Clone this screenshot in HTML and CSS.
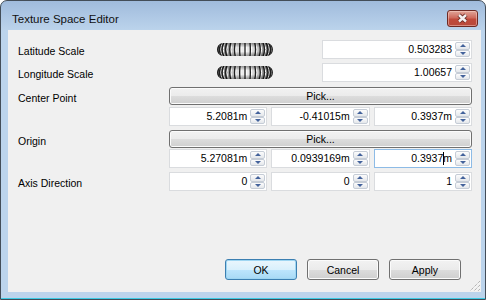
FILE: index.html
```html
<!DOCTYPE html>
<html>
<head>
    <meta charset="utf-8" />
    <title>Texture Space Editor</title>
    <link rel="stylesheet" href="styles.css">
</head>
<body>
    <div class="window">
        <div class="titlebar">
            <span class="title">Texture Space Editor</span>
            <button class="close">
                <svg width="29" height="15" viewBox="0 0 29 15">
                    <path d="M11 4 L18 10.5 M18 4 L11 10.5" stroke="#6a2c26" stroke-width="4.4" fill="none" />
                    <path d="M11 4 L18 10.5 M18 4 L11 10.5" stroke="#f4f0f0" stroke-width="2.4" fill="none" />
                </svg>
            </button>
        </div>

        <div class="client">
            <div class="form">
                <div class="row">
                    <label class="caption">Latitude Scale</label>
                    <div class="controls">
                        <svg class="wheel" width="56" height="13" viewBox="0 0 56 13">
                            <defs>
                                <linearGradient id="wheel-h" x1="0" x2="1" y1="0" y2="0">
                                    <stop offset="0" stop-color="#2c2c2c" />
                                    <stop offset="0.12" stop-color="#7a7a7a" />
                                    <stop offset="0.3" stop-color="#cfcfcf" />
                                    <stop offset="0.5" stop-color="#f4f4f4" />
                                    <stop offset="0.7" stop-color="#cfcfcf" />
                                    <stop offset="0.88" stop-color="#7a7a7a" />
                                    <stop offset="1" stop-color="#2c2c2c" />
                                </linearGradient>
                                <linearGradient id="wheel-v" x1="0" x2="0" y1="0" y2="1">
                                    <stop offset="0" stop-color="#000" stop-opacity="0.4" />
                                    <stop offset="0.35" stop-color="#000" stop-opacity="0" />
                                    <stop offset="0.65" stop-color="#000" stop-opacity="0" />
                                    <stop offset="1" stop-color="#000" stop-opacity="0.4" />
                                </linearGradient>
                                <clipPath id="wheel-clip">
                                    <rect width="56" height="13" rx="6.5" />
                                </clipPath>
                                <g id="wheel-stripes" fill="none">
                                    <path d="M2.7 0 Q-1.2 6.5 2.7 13" />
                                    <path d="M4.2 0 Q0.6 6.5 4.2 13" />
                                    <path d="M6.7 0 Q3.4 6.5 6.7 13" />
                                    <path d="M9.9 0 Q7.1 6.5 9.9 13" />
                                    <path d="M13.8 0 Q11.6 6.5 13.8 13" />
                                    <path d="M18.2 0 Q16.7 6.5 18.2 13" />
                                    <path d="M23 0 Q22.3 6.5 23 13" />
                                    <path d="M28 0 V13" />
                                    <path d="M33 0 Q33.7 6.5 33 13" />
                                    <path d="M37.8 0 Q39.3 6.5 37.8 13" />
                                    <path d="M42.2 0 Q44.4 6.5 42.2 13" />
                                    <path d="M46.1 0 Q48.9 6.5 46.1 13" />
                                    <path d="M49.3 0 Q52.6 6.5 49.3 13" />
                                    <path d="M51.8 0 Q55.4 6.5 51.8 13" />
                                    <path d="M53.3 0 Q57.2 6.5 53.3 13" />
                                </g>
                                <g id="wheel-body">
                                    <rect width="56" height="13" rx="6.5" fill="url(#wheel-h)" />
                                    <g clip-path="url(#wheel-clip)">
                                        <use href="#wheel-stripes" stroke="#ffffff" stroke-width="1" transform="translate(1.3 0)" />
                                        <use href="#wheel-stripes" stroke="#1e1e1e" stroke-width="1.3" />
                                    </g>
                                    <rect width="56" height="13" rx="6.5" fill="url(#wheel-v)" />
                                </g>
                            </defs>
                            <use href="#wheel-body" />
                        </svg>
                        <div class="spinbox wide">
                            <span class="val">0.503283</span>
                            <span class="spin"><i class="spin-btn up"></i><i class="spin-btn down"></i></span>
                        </div>
                    </div>
                </div>

                <div class="row gap-4">
                    <label class="caption">Longitude Scale</label>
                    <div class="controls">
                        <svg class="wheel" width="56" height="13" viewBox="0 0 56 13">
                            <use href="#wheel-body" />
                        </svg>
                        <div class="spinbox wide">
                            <span class="val">1.00657</span>
                            <span class="spin"><i class="spin-btn up"></i><i class="spin-btn down"></i></span>
                        </div>
                    </div>
                </div>

                <div class="row gap-5">
                    <label class="caption">Center Point</label>
                    <div class="controls stack">
                        <button class="pick">Pick...</button>
                        <div class="triple gap-2">
                            <div class="spinbox">
                                <span class="val">5.2081m</span>
                                <span class="spin"><i class="spin-btn up"></i><i class="spin-btn down"></i></span>
                            </div>
                            <div class="spinbox">
                                <span class="val">-0.41015m</span>
                                <span class="spin"><i class="spin-btn up"></i><i class="spin-btn down"></i></span>
                            </div>
                            <div class="spinbox">
                                <span class="val">0.3937m</span>
                                <span class="spin"><i class="spin-btn up"></i><i class="spin-btn down"></i></span>
                            </div>
                        </div>
                    </div>
                </div>

                <div class="row gap-4">
                    <label class="caption">Origin</label>
                    <div class="controls stack">
                        <button class="pick">Pick...</button>
                        <div class="triple gap-1">
                            <div class="spinbox">
                                <span class="val">5.27081m</span>
                                <span class="spin"><i class="spin-btn up"></i><i class="spin-btn down"></i></span>
                            </div>
                            <div class="spinbox">
                                <span class="val">0.0939169m</span>
                                <span class="spin"><i class="spin-btn up"></i><i class="spin-btn down"></i></span>
                            </div>
                            <div class="spinbox focus">
                                <span class="val">0.3937<span class="caret"></span>m</span>
                                <span class="spin"><i class="spin-btn up"></i><i class="spin-btn down"></i></span>
                            </div>
                        </div>
                    </div>
                </div>

                <div class="row gap-4">
                    <label class="caption">Axis Direction</label>
                    <div class="controls">
                        <div class="triple">
                            <div class="spinbox">
                                <span class="val">0</span>
                                <span class="spin"><i class="spin-btn up"></i><i class="spin-btn down"></i></span>
                            </div>
                            <div class="spinbox">
                                <span class="val">0</span>
                                <span class="spin"><i class="spin-btn up"></i><i class="spin-btn down"></i></span>
                            </div>
                            <div class="spinbox">
                                <span class="val">1</span>
                                <span class="spin"><i class="spin-btn up"></i><i class="spin-btn down"></i></span>
                            </div>
                        </div>
                    </div>
                </div>
            </div>

            <div class="footer">
                <button class="btn default">OK</button>
                <button class="btn">Cancel</button>
                <button class="btn">Apply</button>
            </div>

            <svg class="grip" width="11" height="11" viewBox="0 0 11 11">
                <path d="M11 1 L1 11 M11 5 L5 11 M11 9 L9 11" stroke="#ffffff" stroke-width="1" stroke-dasharray="1 1" transform="translate(0.7 0.7)" />
                <path d="M11 1 L1 11 M11 5 L5 11 M11 9 L9 11" stroke="#9a9a9a" stroke-width="1" stroke-dasharray="1 1" />
            </svg>
        </div>
    </div>
</body>
</html>
```

FILE: styles.css
```css
body {
    margin: 0;
    background: #ffffff;
    font-family: "Liberation Sans", Arial, sans-serif;
    font-size: 10.5px;
    color: #000;
}

.window {
    width: 486px;
    height: 300px;
    box-sizing: border-box;
    border: 1px solid #434d58;
    border-radius: 7px 7px 0 0;
    padding: 0 4px 7px 7px;
    display: flex;
    flex-direction: column;
    background: linear-gradient(#a0bbdc, #bcd4ec 30px, #bcd4ec);
    box-shadow: inset 0 -1px 0 #3ccbe4;
}

.titlebar {
    height: 29px;
    box-sizing: border-box;
    padding-top: 6px;
    display: flex;
    align-items: center;
}

.title {
    flex: 1;
    padding-left: 4px;
    font-size: 11.5px;
    color: #111;
}

.close {
    width: 31px;
    height: 17px;
    margin-right: 3px;
    padding: 0;
    border: 1px solid #6e2a24;
    border-radius: 3px;
    background: linear-gradient(#e0a599, #cf6b5d 45%, #c04a3b 55%, #b84a3c);
    box-shadow: inset 0 0 0 1px rgba(255, 220, 210, 0.45);
    display: flex;
}

.client {
    flex: 1;
    position: relative;
    background: #f0f0f0;
    display: flex;
    flex-direction: column;
}

.form {
    padding: 10px 0 0 10px;
}

.row {
    display: flex;
    align-items: flex-start;
}

.caption {
    width: 151px;
    padding-top: 5px;
    line-height: 13px;
}

.controls {
    width: 303px;
    display: flex;
    align-items: center;
}

    .controls.stack {
        flex-direction: column;
        align-items: stretch;
    }

.gap-1 { margin-top: 1px; }
.gap-2 { margin-top: 2px; }
.gap-4 { margin-top: 4px; }
.gap-5 { margin-top: 5px; }

.wheel {
    margin-left: 48px;
    display: block;
}

.spinbox {
    height: 19px;
    box-sizing: border-box;
    border: 1px solid #dadcdf;
    background: #fff;
    display: flex;
}

    .spinbox.wide {
        width: 150px;
        margin-left: auto;
    }

    .spinbox.focus {
        border-color: #8dbbe6;
    }

.val {
    flex: 1;
    text-align: right;
    padding-right: 3px;
    line-height: 17px;
    white-space: nowrap;
}

.caret {
    display: inline-block;
    width: 1px;
    height: 13px;
    margin: 0 -1px 0 0;
    background: #000;
    vertical-align: -3px;
}

.spin {
    width: 15px;
    padding: 1px 1px 1px 0;
    display: flex;
    flex-direction: column;
}

.spin-btn {
    flex: 1;
    border: 1px solid #c5ccd6;
    border-radius: 2px;
    background: linear-gradient(#fcfcfc, #e4e7eb);
    display: flex;
    align-items: center;
    justify-content: center;
}

    .spin-btn::before {
        content: "";
        border-left: 3px solid transparent;
        border-right: 3px solid transparent;
    }

    .spin-btn.up::before {
        border-bottom: 3px solid #43629b;
    }

    .spin-btn.down::before {
        border-top: 3px solid #43629b;
    }

.triple {
    width: 100%;
    display: grid;
    grid-template-columns: 1fr 1fr 1fr;
    gap: 4px;
}

.pick, .btn {
    font-family: inherit;
    font-size: 10.5px;
    color: #000;
    padding: 0;
    border: 1px solid #707070;
    border-radius: 3px;
    background: linear-gradient(#f2f2f2, #ebebeb 50%, #dddddd 50%, #cfcfcf);
    box-shadow: inset 0 0 0 1px #fbfbfb;
}

.pick {
    height: 18px;
    line-height: 16px;
}

.footer {
    margin-top: auto;
    padding: 0 20px 12px 0;
    display: flex;
    justify-content: flex-end;
    gap: 10px;
}

.btn {
    width: 72px;
    height: 21px;
}

    .btn.default {
        border-color: #3c7fb1;
        background: linear-gradient(#eaf6fd, #d9f0fc 50%, #bee6fd 50%, #a7d9f5);
        box-shadow: inset 0 0 0 1px #9fd6f2;
    }

.grip {
    position: absolute;
    right: 1px;
    bottom: 1px;
}
```
